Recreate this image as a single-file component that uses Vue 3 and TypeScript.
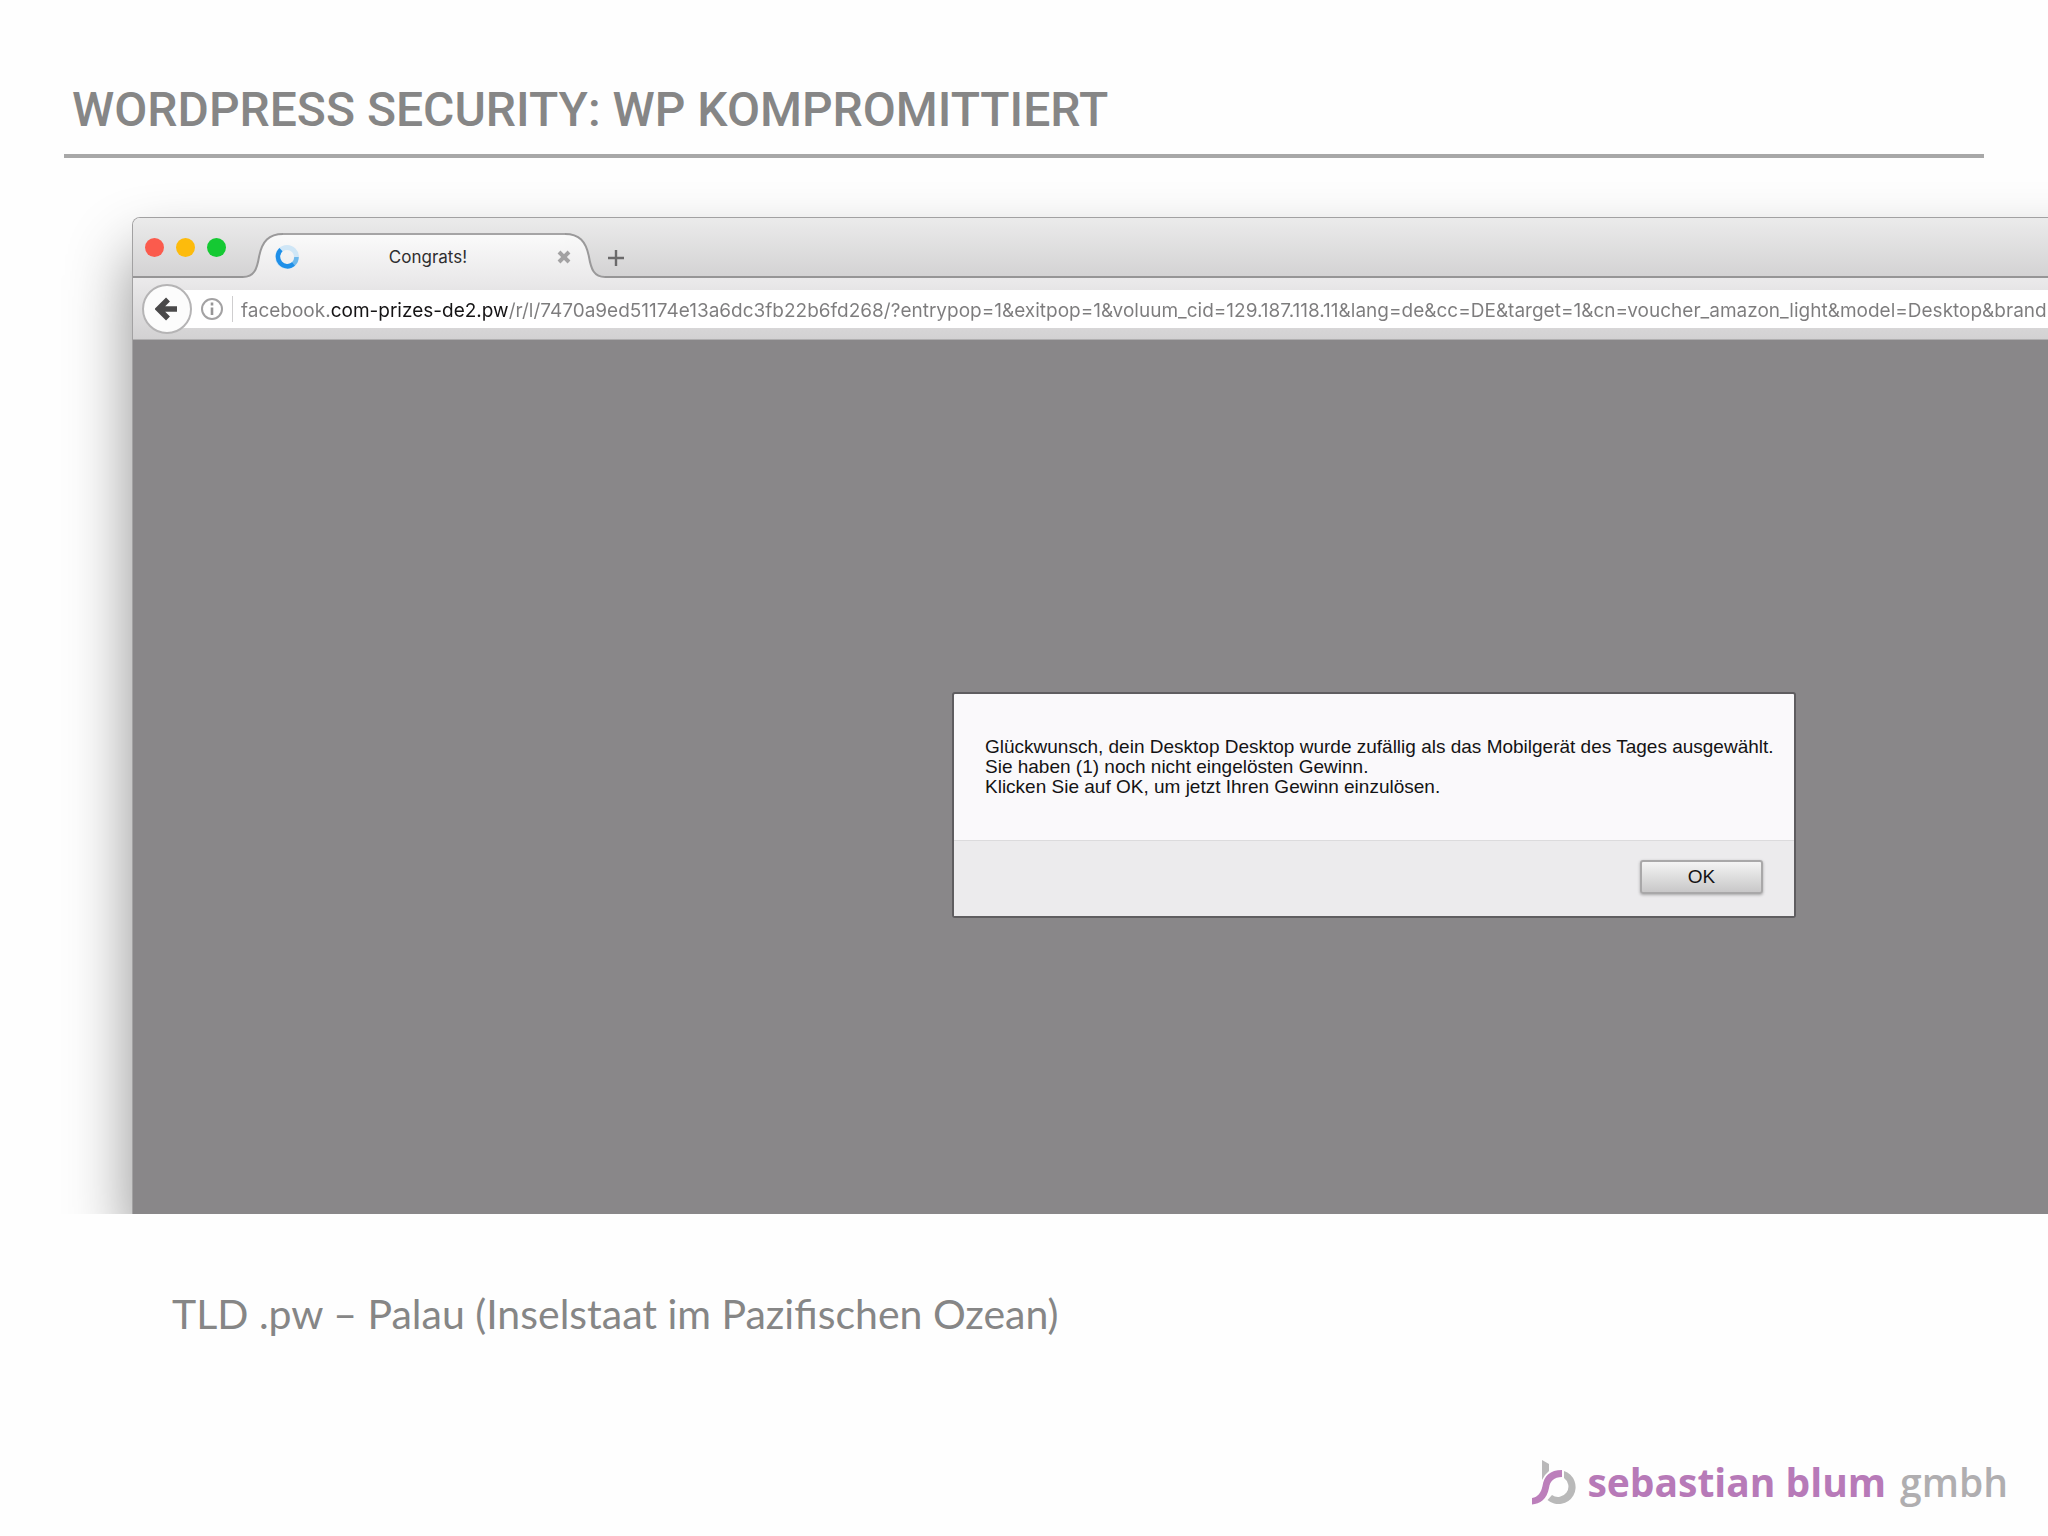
<script setup lang="ts">
import { ref } from 'vue'

const title = 'WORDPRESS SECURITY: WP KOMPROMITTIERT'
const tabTitle = 'Congrats!'
const url = ref(
  'facebook.com-prizes-de2.pw/r/l/7470a9ed51174e13a6dc3fb22b6fd268/?entrypop=1&exitpop=1&voluum_cid=129.187.118.11&lang=de&cc=DE&target=1&cn=voucher_amazon_light&model=Desktop&brand='
)
const message: string[] = [
  'Glückwunsch, dein Desktop Desktop wurde zufällig als das Mobilgerät des Tages ausgewählt.',
  'Sie haben (1) noch nicht eingelösten Gewinn.',
  'Klicken Sie auf OK, um jetzt Ihren Gewinn einzulösen.',
]
const lights: string[] = ['close', 'minimize', 'zoom']
</script>

<template>
  <main class="slide">
    <header class="slide-header">
      <h1>{{ title }}</h1>
    </header>

    <div class="stage">
      <div class="window">
        <div class="tab-strip">
          <div class="lights">
            <button v-for="l in lights" :key="l" type="button" :class="['light', l]" :aria-label="l"></button>
          </div>
          <div class="tab">
            <svg class="tab-edge" viewBox="0 0 40 45" aria-hidden="true">
              <defs>
                <linearGradient id="tabFill" x1="0" y1="0" x2="0" y2="1">
                  <stop offset="0" stop-color="#fafafa" />
                  <stop offset="1" stop-color="#ebeaeb" />
                </linearGradient>
              </defs>
              <path d="M0 44C11 44 14 36 16 24C19 8 26 1 40 1V45H0Z" fill="url(#tabFill)" />
              <path d="M0 44C11 44 14 36 16 24C19 8 26 1 40 1" fill="none" stroke="#9a999a" stroke-width="2" />
            </svg>
            <div class="tab-body">
              <svg class="spinner" viewBox="0 0 24 24" aria-hidden="true">
                <circle cx="12" cy="12" r="9.500" fill="none" stroke="#cfe6f6" stroke-width="5" />
                <path d="M21.500 12A9.500 9.500 0 0 1 12 21.500" fill="none" stroke="#6db8ec" stroke-width="4.500" />
                <path d="M18.500 19A9.500 9.500 0 0 1 6 4.700" fill="none" stroke="#1f8fe8" stroke-width="4.500" />
              </svg>
              <span class="tab-title">{{ tabTitle }}</span>
              <button type="button" class="tab-close" aria-label="Tab schließen">
                <svg viewBox="0 0 14 14"><path d="M2 2L12 12M12 2L2 12" stroke="#a3a2a3" stroke-width="4" /></svg>
              </button>
            </div>
            <svg class="tab-edge" viewBox="0 0 40 45" aria-hidden="true">
              <path d="M40 44C29 44 26 36 24 24C21 8 14 1 0 1V45H40Z" fill="url(#tabFill)" />
              <path d="M40 44C29 44 26 36 24 24C21 8 14 1 0 1" fill="none" stroke="#9a999a" stroke-width="2" />
            </svg>
          </div>
          <button type="button" class="new-tab" aria-label="Neuer Tab">
            <svg viewBox="0 0 16 16"><path d="M8 0V16M0 8H16" stroke="#6b6a6b" stroke-width="2.400" /></svg>
          </button>
        </div>

        <div class="toolbar">
          <button type="button" class="back" aria-label="Zurück">
            <svg viewBox="0 0 24 24">
              <path d="M22 12H5M13 2.500L3.500 12L13 21.500" fill="none" stroke="#4a494a" stroke-width="5.500" />
            </svg>
          </button>
          <div class="url-field">
            <svg class="info" viewBox="0 0 24 24" aria-hidden="true">
              <circle cx="12" cy="12" r="10" fill="none" stroke="#a3a2a3" stroke-width="2" />
              <path d="M12 10.500V18M12 5.500V8.500" stroke="#969596" stroke-width="2.600" />
            </svg>
            <input v-model="url" class="url" type="text" aria-label="Adresse" spellcheck="false" />
          </div>
        </div>

        <div class="page">
          <section class="dialog" role="dialog" aria-label="Hinweis">
            <div class="dialog-text">
              <p v-for="line in message" :key="line">{{ line }}</p>
            </div>
            <div class="dialog-actions">
              <button type="button" class="ok">OK</button>
            </div>
          </section>
        </div>
      </div>
    </div>

    <p class="caption">TLD .pw – Palau (Inselstaat im Pazifischen Ozean)</p>

    <footer class="brand">
      <svg class="brand-mark" viewBox="0 0 45 45" aria-hidden="true">
        <path d="M10 0L17 4V11Q12 15 10 20Z" fill="#b9b8b9" />
        <path d="M32 11V18A10 10 0 1 1 20 35L15.500 40A17 17 0 1 0 32 11Z" fill="#b9b9b9" />
        <path d="M30 10V17C22 17 18 21 17 28C15 39 8 44 0 44.500V38C6 37 9 33 10.500 26C12 16 18 10 30 10Z" fill="#bc7fbb" />
      </svg>
      <span class="brand-name">sebastian blum</span>
      <span class="brand-suffix">gmbh</span>
    </footer>
  </main>
</template>

<style>
body {
  margin: 0;
  background: #fefefe;
}
</style>

<style scoped>
.slide {
  min-height: 100vh;
  box-sizing: border-box;
  display: flex;
  flex-direction: column;
  overflow: hidden;
  font-family: 'Liberation Sans', sans-serif;
}
.slide-header {
  margin: 77px 64px 0;
  padding: 0 8px 11px;
  border-bottom: 4px solid #a8a8a8;
}
h1 {
  margin: 0;
  font: 500 48px/66px Roboto, sans-serif;
  color: #868686;
  white-space: nowrap;
}
p {
  margin: 0;
}
button {
  padding: 0;
  border: 0;
  background: none;
  font: inherit;
}
svg {
  display: block;
}
.stage {
  overflow: hidden;
  padding: 59px 0 0 132px;
}
.window {
  width: calc(100vw + 436px);
  box-sizing: border-box;
  border: 1px solid #a2a1a2;
  border-bottom: 0;
  border-radius: 8px 8px 0 0;
  box-shadow: 0 36px 64px rgba(0, 0, 0, 0.44);
}
.tab-strip {
  display: flex;
  align-items: flex-end;
  height: 60px;
  border-radius: 7px 7px 0 0;
  background: linear-gradient(#ebebeb, #d3d2d3);
  box-shadow: inset 0 -2px #969596;
}
.lights {
  display: flex;
  gap: 12px;
  align-self: center;
  padding: 0 0 2px 12px;
}
.light {
  width: 19px;
  height: 19px;
  border-radius: 50%;
}
.light.close {
  background: #fb5b4d;
}
.light.minimize {
  background: #fdbb0c;
}
.light.zoom {
  background: #15c933;
}
.tab {
  display: flex;
  margin-left: 17px;
}
.tab-edge {
  width: 40px;
  height: 45px;
}
.tab-body {
  display: flex;
  align-items: center;
  width: 282px;
  height: 45px;
  box-sizing: border-box;
  border-top: 2px solid #a5a4a5;
  background: linear-gradient(#fafafa, #ebeaeb);
}
.spinner {
  width: 24px;
  height: 24px;
  margin-left: -8px;
}
.tab-title {
  flex: 1;
  text-align: center;
  font: 17px/24px Inter, sans-serif;
  color: #2f2e2f;
}
.tab-close {
  position: relative;
  z-index: 1;
  margin-right: -6px;
}
.tab-close svg {
  width: 14px;
  height: 14px;
}
.new-tab {
  margin: 0 0 12px 3px;
}
.new-tab svg {
  width: 16px;
  height: 16px;
}
.toolbar {
  display: flex;
  align-items: center;
  height: 62px;
  padding-left: 9px;
  background: linear-gradient(#ebeaeb, #d2d1d2);
  box-shadow: inset 0 -1px #b0afb0;
}
.back {
  position: relative;
  display: grid;
  place-items: center;
  width: 50px;
  height: 50px;
  box-sizing: border-box;
  border: 2px solid #b5b4b5;
  border-radius: 50%;
  background: #fcfcfc;
}
.back svg {
  width: 24px;
  height: 24px;
}
.url-field {
  flex: 1;
  display: flex;
  align-items: center;
  height: 38px;
  margin-left: -10px;
  padding-left: 18px;
  background: #fff;
}
.info {
  width: 24px;
  height: 24px;
  margin-right: 8px;
}
.url {
  flex: 1;
  height: 26px;
  padding: 2px 0 0 8px;
  box-sizing: border-box;
  border: 0;
  border-left: 1px solid #cfcecf;
  outline: 0;
  font: 19px/24px Inter, sans-serif;
  color: #7d7c7d;
  background: linear-gradient(90deg, #7d7c7d 98px, #141314 98px 276px, #7d7c7d 276px);
  background-clip: text;
  -webkit-text-fill-color: transparent;
}
.page {
  display: flex;
  justify-content: center;
  padding: 352px 0 296px;
  background: #898789;
}
.dialog {
  box-sizing: border-box;
  width: 844px;
  border: 2px solid #5f5d60;
  border-radius: 3px;
  background: #faf9fb;
}
.dialog-text {
  padding: 43px 0 43px 31px;
  font-size: 19px;
  line-height: 20px;
  color: #141314;
  white-space: nowrap;
}
.dialog-actions {
  display: flex;
  justify-content: flex-end;
  padding: 19px 31px 22px;
  border-top: 1px solid #dcdbdd;
  background: #ecebed;
}
.ok {
  width: 123px;
  height: 34px;
  box-sizing: border-box;
  border: 2px solid #a9a8a9;
  border-radius: 3px;
  background: linear-gradient(#f4f4f4, #c8c7c8);
  box-shadow: 0 1px 3px rgba(0, 0, 0, 0.3);
  font-size: 19px;
  color: #141314;
}
.caption {
  margin: 76px 172px 0;
  font: 41px/48px Lato, sans-serif;
  color: #868686;
  white-space: nowrap;
}
.brand {
  display: flex;
  align-items: center;
  justify-content: flex-end;
  margin: auto 40px 27px 0;
  font: 700 39px/54px 'Open Sans', sans-serif;
}
.brand-mark {
  width: 45px;
  height: 45px;
  margin-right: 10px;
}
.brand-name {
  color: #b77ab8;
}
.brand-suffix {
  margin-left: 14px;
  font-weight: 600;
  color: #b0aeb0;
}
</style>
